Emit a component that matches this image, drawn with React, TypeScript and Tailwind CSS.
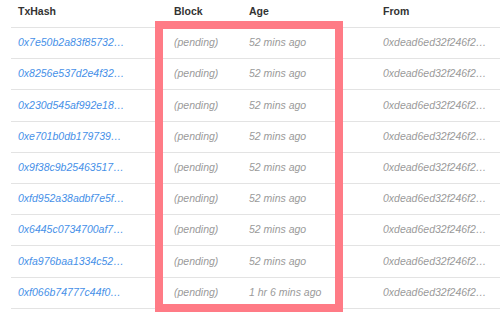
import React from "react";

const hashes = [
  "0x7e50b2a83f85732…",
  "0x8256e537d2e4f32…",
  "0x230d545af992e18…",
  "0xe701b0db179739…",
  "0x9f38c9b25463517…",
  "0xfd952a38adbf7e5f…",
  "0x6445c0734700af7…",
  "0xfa976baa1334c52…",
  "0xf066b74777c44f0…",
];

export default function App() {
  return (
    <div
      className="relative w-[500px] h-[318px] overflow-hidden bg-white"
      style={{ fontFamily: '"Liberation Sans", Arial, sans-serif' }}
    >
      <div className="ml-[11px] w-[540px]">
        <div className="flex h-[28px] items-center border-b border-[#e3e3e3] text-[10.5px] font-bold text-[#333]">
          <div className="w-[156px] pl-[7px] pb-[3px]">TxHash</div>
          <div className="w-[75px] pl-[7px] pb-[3px]">Block</div>
          <div className="w-[134px] pl-[7px] pb-[3px]">Age</div>
          <div className="flex-1 pl-[7px] pb-[3px]">From</div>
        </div>
        {hashes.map((h, i) => (
          <div
            key={h}
            className="flex h-[31.2px] items-center border-b border-[#e3e3e3] text-[10.5px] italic"
          >
            <div className="w-[156px] pl-[7px] text-[#4690e8]">{h}</div>
            <div className="w-[75px] pl-[7px] text-[#9a9a9a]">(pending)</div>
            <div className="w-[134px] pl-[7px] text-[#9a9a9a]">
              {i === 8 ? "1 hr 6 mins ago" : "52 mins ago"}
            </div>
            <div className="flex-1 pl-[7px] text-[#9a9a9a]">0xdead6ed32f246f2…</div>
          </div>
        ))}
      </div>
      <div className="absolute left-[155px] top-[21px] w-[188px] h-[291px] border-[8px] border-[#ff7b86]" />
    </div>
  );
}
